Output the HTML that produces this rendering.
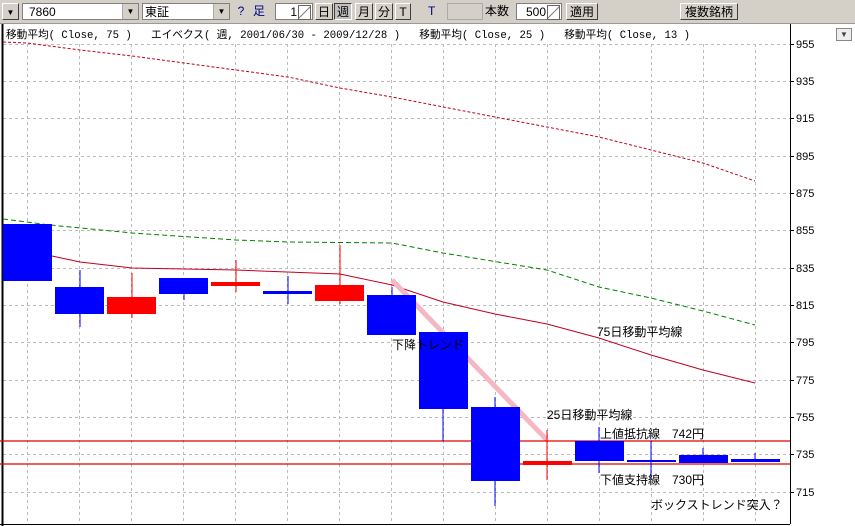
<!DOCTYPE html>
<html><head><meta charset="utf-8"><style>
body{margin:0;width:855px;height:526px;overflow:hidden;background:#fff;font-family:"Liberation Sans","Noto Sans CJK JP",sans-serif;}
#tb{position:absolute;left:0;top:0;width:855px;height:23px;background:#d4d0c8;border-bottom:1px solid #999;}
.b{position:absolute;top:3px;height:17px;font-size:12px;line-height:17px;box-sizing:border-box;}
.in{background:#fff;border:1px solid #808080;}
.btn{border:1px solid;border-color:#fff #404040 #404040 #fff;background:#d4d0c8;text-align:center;}
.dd{position:absolute;top:0;right:0;width:15px;height:15px;background:#d4d0c8;border-left:1px solid #aaa;font-size:8px;text-align:center;line-height:15px;}
.sp{position:absolute;top:1px;right:1px;width:11px;height:13px;border:1px solid #666;background:linear-gradient(135deg,#fff 45%,#666 50%,#fff 55%);}
</style></head><body>
<div id="tb">
<div class="b btn" style="left:2px;width:17px;font-size:8px">▼</div>
<div class="b in" style="left:22px;width:117px;padding-left:6px">7860<div class="dd">▼</div></div>
<div class="b in" style="left:142px;width:88px;padding-left:2px">東証<div class="dd">▼</div></div>
<div class="b" style="left:234px;width:14px;color:#008;text-align:center">?</div>
<div class="b" style="left:253px;width:20px;color:#008">足</div>
<div class="b in" style="left:275px;width:38px;text-align:right;padding-right:15px">1<div class="sp"></div></div>
<div class="b btn" style="left:315px;width:18px">日</div>
<div class="b btn" style="left:334px;width:18px;background:#c0c0c0;border-color:#404040 #fff #fff #404040">週</div>
<div class="b btn" style="left:355px;width:18px">月</div>
<div class="b btn" style="left:375px;width:18px">分</div>
<div class="b btn" style="left:395px;width:16px">T</div>
<div class="b" style="left:428px;width:12px;color:#008">T</div>
<div class="b" style="left:447px;width:36px;background:#d4d0c8;border:1px solid #aaa"></div>
<div class="b" style="left:485px;width:30px">本数</div>
<div class="b in" style="left:516px;width:46px;text-align:right;padding-right:15px">500<div class="sp"></div></div>
<div class="b btn" style="left:566px;width:32px">適用</div>
<div class="b btn" style="left:680px;width:58px">複数銘柄</div>
</div>
<div style="position:absolute;left:6px;top:26px;font-size:11px;white-space:pre;font-family:'Liberation Mono','Noto Sans CJK JP',monospace;transform:scaleX(0.969);transform-origin:0 0">移動平均( Close, 75 )   エイベクス( 週, 2001/06/30 - 2009/12/28 )   移動平均( Close, 25 )   移動平均( Close, 13 )</div>
<div style="position:absolute;left:836px;top:28px;width:14px;height:11px;border:1px solid #888;background:#eee;font-size:8px;line-height:11px;text-align:center;color:#444">▼</div>
<svg width="855" height="526" style="position:absolute;left:0;top:0" font-family="Liberation Sans,Noto Sans CJK JP,sans-serif">
<g stroke="#bbb" stroke-dasharray="3,3" stroke-width="1">
<line x1="3" x2="790" y1="44.5" y2="44.5"/><line x1="3" x2="790" y1="81.5" y2="81.5"/><line x1="3" x2="790" y1="118.5" y2="118.5"/><line x1="3" x2="790" y1="156.5" y2="156.5"/><line x1="3" x2="790" y1="193.5" y2="193.5"/><line x1="3" x2="790" y1="230.5" y2="230.5"/><line x1="3" x2="790" y1="268.5" y2="268.5"/><line x1="3" x2="790" y1="305.5" y2="305.5"/><line x1="3" x2="790" y1="342.5" y2="342.5"/><line x1="3" x2="790" y1="380.5" y2="380.5"/><line x1="3" x2="790" y1="417.5" y2="417.5"/><line x1="3" x2="790" y1="454.5" y2="454.5"/><line x1="3" x2="790" y1="492.5" y2="492.5"/>
<line y1="44" y2="524" x1="27.5" x2="27.5"/><line y1="44" y2="524" x1="79.5" x2="79.5"/><line y1="44" y2="524" x1="131.5" x2="131.5"/><line y1="44" y2="524" x1="183.5" x2="183.5"/><line y1="44" y2="524" x1="235.5" x2="235.5"/><line y1="44" y2="524" x1="287.5" x2="287.5"/><line y1="44" y2="524" x1="339.5" x2="339.5"/><line y1="44" y2="524" x1="391.5" x2="391.5"/><line y1="44" y2="524" x1="443.5" x2="443.5"/><line y1="44" y2="524" x1="495.5" x2="495.5"/><line y1="44" y2="524" x1="547.5" x2="547.5"/><line y1="44" y2="524" x1="599.5" x2="599.5"/><line y1="44" y2="524" x1="651.5" x2="651.5"/><line y1="44" y2="524" x1="703.5" x2="703.5"/><line y1="44" y2="524" x1="755.5" x2="755.5"/>
</g>
<line x1="2.5" y1="24" x2="2.5" y2="526" stroke="#000" stroke-width="2"/>
<line x1="790.5" y1="24" x2="790.5" y2="524" stroke="#000"/>
<line x1="0" y1="524.5" x2="790" y2="524.5" stroke="#000"/>
<g font-size="11" fill="#000">
<text x="796" y="48">955</text><text x="796" y="85">935</text><text x="796" y="122">915</text><text x="796" y="160">895</text><text x="796" y="197">875</text><text x="796" y="234">855</text><text x="796" y="272">835</text><text x="796" y="309">815</text><text x="796" y="346">795</text><text x="796" y="384">775</text><text x="796" y="421">755</text><text x="796" y="458">735</text><text x="796" y="496">715</text>
</g>
<g stroke="#000"><line x1="790" x2="794" y1="44.5" y2="44.5"/><line x1="790" x2="794" y1="81.5" y2="81.5"/><line x1="790" x2="794" y1="118.5" y2="118.5"/><line x1="790" x2="794" y1="156.5" y2="156.5"/><line x1="790" x2="794" y1="193.5" y2="193.5"/><line x1="790" x2="794" y1="230.5" y2="230.5"/><line x1="790" x2="794" y1="268.5" y2="268.5"/><line x1="790" x2="794" y1="305.5" y2="305.5"/><line x1="790" x2="794" y1="342.5" y2="342.5"/><line x1="790" x2="794" y1="380.5" y2="380.5"/><line x1="790" x2="794" y1="417.5" y2="417.5"/><line x1="790" x2="794" y1="454.5" y2="454.5"/><line x1="790" x2="794" y1="492.5" y2="492.5"/></g>
<polyline fill="none" stroke="#c00020" stroke-dasharray="3,2" points="3,42 27,43 80,50 132,56 184,63 236,70 288,77 340,88 392,97 495,117 599,137 703,163 755,181"/>
<polyline fill="none" stroke="#008000" stroke-dasharray="5,3" points="3,219 50,225 132,233 236,240 288,242 392,243 443,253 547,270 599,287 651,298 703,311 755,325"/>
<polyline fill="none" stroke="#c00020" points="52,256 80,262 132,268 236,270 340,274 392,285 443,302 495,314 547,324 599,338 651,355 703,370 755,383"/>
<line x1="392" y1="280" x2="547" y2="440" stroke="#f4b8c4" stroke-width="5"/>
<line x1="0" x2="790" y1="441" y2="441" stroke="#e00000" stroke-width="1.2"/>
<line x1="0" x2="790" y1="464" y2="464" stroke="#e00000" stroke-width="1.2"/>
<g stroke="#0000ff"><line x1="80" x2="80" y1="270" y2="327"/><line x1="184" x2="184" y1="278" y2="300"/><line x1="288" x2="288" y1="276" y2="304"/><line x1="392" x2="392" y1="287" y2="335"/><line x1="443" x2="443" y1="332" y2="441"/><line x1="495" x2="495" y1="397" y2="506"/><line x1="599" x2="599" y1="427" y2="473"/><line x1="651" x2="651" y1="441" y2="477"/><line x1="703" x2="703" y1="448" y2="463"/><line x1="755" x2="755" y1="453" y2="462"/></g>
<g stroke="#ff0000"><line x1="132" x2="132" y1="273" y2="318"/><line x1="236" x2="236" y1="260" y2="292"/><line x1="340" x2="340" y1="245" y2="304"/><line x1="547" x2="547" y1="430" y2="480"/></g>
<g fill="#0000ff">
<rect x="3" y="224" width="49" height="57"/><rect x="55" y="287" width="49" height="27"/><rect x="159" y="278" width="49" height="16"/><rect x="263" y="291" width="49" height="3"/><rect x="367" y="295" width="49" height="40"/><rect x="419" y="332" width="49" height="77"/><rect x="471" y="407" width="49" height="74"/><rect x="575" y="441" width="49" height="20"/><rect x="627" y="460" width="49" height="2"/><rect x="679" y="455" width="49" height="8"/><rect x="731" y="459" width="49" height="3"/>
</g>
<g fill="#ff0000"><rect x="107" y="297" width="49" height="17"/><rect x="211" y="282" width="49" height="4"/><rect x="315" y="285" width="49" height="16"/><rect x="523" y="461" width="49" height="4"/></g>
<g font-size="12" fill="#000">
<text x="597" y="336">75日移動平均線</text>
<text x="392" y="349">下降トレンド</text>
<text x="547" y="419">25日移動平均線</text>
<text x="600" y="438">上値抵抗線　742円</text>
<text x="600" y="484">下値支持線　730円</text>
<text x="651" y="509">ボックストレンド突入？</text>
</g>
</svg>
</body></html>
